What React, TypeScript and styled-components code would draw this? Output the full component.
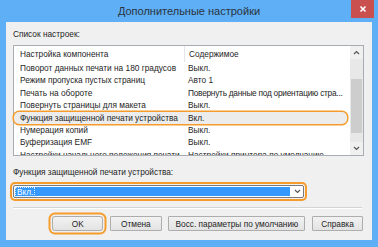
import React from "react";
import styled, { createGlobalStyle } from "styled-components";

const GlobalStyle = createGlobalStyle`
  html, body {
    margin: 0;
    padding: 0;
    background: #ffffff;
  }
  body {
    font-family: "Liberation Sans", Arial, sans-serif;
  }
`;

const ORANGE = "#f59c2c";

type Setting = { name: string; value: string; focused?: boolean; tight?: boolean };

const settings: Setting[] = [
  { name: "Поворот данных печати на 180 градусов", value: "Выкл." },
  { name: "Режим пропуска пустых страниц", value: "Авто 1" },
  { name: "Печать на обороте", value: "Повернуть данные под ориентацию стра...", tight: true },
  { name: "Повернуть страницы для макета", value: "Выкл." },
  { name: "Функция защищенной печати устройства", value: "Вкл.", focused: true },
  { name: "Нумерация копий", value: "Выкл." },
  { name: "Буферизация EMF", value: "Выкл." },
  { name: "Настройки начального положения печати", value: "Настройки принтера по умолчанию" },
];

const Chevron = ({ up }: { up?: boolean }) => (
  <svg width="7" height="5" viewBox="0 0 7 5">
    <path
      d={up ? "M1 4 L3.5 1.5 L6 4" : "M1 1 L3.5 3.5 L6 1"}
      fill="none"
      stroke="#555"
      strokeWidth="1.2"
    />
  </svg>
);

export default function App() {
  return (
    <>
      <GlobalStyle />
      <Window>
        <TitleBar>
          <span />
          <Title>Дополнительные настройки</Title>
          <CloseButton>
            <svg width="8" height="8" viewBox="0 0 8 8">
              <path d="M1.5 1.5 L6.5 6.5 M6.5 1.5 L1.5 6.5" stroke="#fff" strokeWidth="1.6" />
            </svg>
          </CloseButton>
        </TitleBar>
        <Client>
          <Label>Список настроек:</Label>
          <ListBox>
            <ListBody>
              <HeaderRow>
                <HeaderCell>Настройка компонента</HeaderCell>
                <HeaderCell $last>Содержимое</HeaderCell>
              </HeaderRow>
              <Rows>
                {settings.map((s) => (
                  <Row key={s.name} $focused={s.focused}>
                    <NameCell>{s.name}</NameCell>
                    <ValueCell $tight={s.tight}>{s.value}</ValueCell>
                  </Row>
                ))}
              </Rows>
            </ListBody>
            <ScrollBar>
              <ScrollArrow>
                <Chevron up />
              </ScrollArrow>
              <Track>
                <Thumb />
              </Track>
              <ScrollArrow>
                <Chevron />
              </ScrollArrow>
            </ScrollBar>
          </ListBox>
          <Label $gap>Функция защищенной печати устройства:</Label>
          <Select>
            <SelectValue>
              <FocusText>Вкл.</FocusText>
            </SelectValue>
            <SelectArrow>
              <Chevron />
            </SelectArrow>
          </Select>
          <Separator />
          <ButtonRow>
            <Button $w={51} $focused>
              OK
            </Button>
            <Button $w={52}>Отмена</Button>
            <Button $w={137}>Восс. параметры по умолчанию</Button>
            <Button $w={51}>Справка</Button>
          </ButtonRow>
        </Client>
      </Window>
    </>
  );
}

const Window = styled.div`
  width: 378px;
  height: 247px;
  background: #5eaff5;
  display: flex;
  flex-direction: column;
  box-sizing: border-box;
  padding-bottom: 7px;
`;

const TitleBar = styled.div`
  height: 22px;
  display: grid;
  grid-template-columns: 1fr auto 1fr;
  align-items: start;
`;

const Title = styled.div`
  font-size: 11px;
  line-height: 23px;
  color: #2a3340;
  white-space: nowrap;
`;

const CloseButton = styled.div`
  justify-self: end;
  margin-right: 4px;
  width: 23px;
  height: 18px;
  background: #c9504f;
  display: flex;
  align-items: center;
  justify-content: center;
`;

const Client = styled.div`
  flex: 1;
  margin: 0 6px;
  background: #f0f0f0;
  padding: 6px 8px 9px 7px;
  display: flex;
  flex-direction: column;
`;

const Label = styled.div<{ $gap?: boolean }>`
  font-size: 8.3px;
  line-height: 12px;
  color: #1e1e1e;
  margin-top: ${(p) => (p.$gap ? "10px" : "0")};
  margin-bottom: ${(p) => (p.$gap ? "7px" : "5px")};
  white-space: nowrap;
`;

const ListBox = styled.div`
  height: 111px;
  box-sizing: border-box;
  border: 1px solid #a8adb4;
  background: #ffffff;
  display: grid;
  grid-template-columns: 1fr 13px;
  grid-template-rows: 100%;
`;

const ListBody = styled.div`
  display: flex;
  flex-direction: column;
  min-width: 0;
  min-height: 0;
`;

const HeaderRow = styled.div`
  height: 16px;
  flex: none;
  display: grid;
  grid-template-columns: 170px 1fr;
  align-items: center;
  font-size: 8.3px;
  color: #1e1e1e;
`;

const HeaderCell = styled.div<{ $last?: boolean }>`
  padding-left: ${(p) => (p.$last ? "4px" : "6px")};
  border-left: ${(p) => (p.$last ? "1px solid #e3e5e8" : "none")};
  line-height: 16px;
  white-space: nowrap;
`;

const Rows = styled.div`
  flex: 1;
  min-height: 0;
  clip-path: inset(0 -6px 0 -6px);
`;

const Row = styled.div<{ $focused?: boolean }>`
  height: 12.4px;
  display: grid;
  grid-template-columns: 170px 1fr;
  align-items: center;
  font-size: 8.3px;
  color: #1e1e1e;
  margin-right: ${(p) => (p.$focused ? "3px" : "0")};
  border-radius: 5px;
  background: ${(p) => (p.$focused ? "#ececec" : "transparent")};
  box-shadow: ${(p) => (p.$focused ? `0 0 0 1.5px ${ORANGE}` : "none")};
`;

const NameCell = styled.div`
  padding-left: 6px;
  white-space: nowrap;
  line-height: 12.4px;
`;

const ValueCell = styled.div<{ $tight?: boolean }>`
  padding: 0 2px 0 4px;
  white-space: nowrap;
  line-height: 12.4px;
  letter-spacing: ${(p) => (p.$tight ? "-0.25px" : "normal")};
`;

const ScrollBar = styled.div`
  background: #e8e8e8;
  display: flex;
  flex-direction: column;
  min-height: 0;
  position: relative;
  z-index: 1;
`;

const ScrollArrow = styled.div`
  height: 13px;
  flex: none;
  display: flex;
  align-items: center;
  justify-content: center;
  background: #f0f0f0;
`;

const Track = styled.div`
  flex: 1;
  padding-top: 20px;
`;

const Thumb = styled.div`
  height: 54px;
  margin: 0 1px;
  background: #cdcdcd;
`;

const Select = styled.div`
  height: 13px;
  width: 291px;
  box-sizing: border-box;
  border: 1px solid #7a7a7a;
  border-radius: 2px;
  background: #ffffff;
  display: flex;
  box-shadow: 0 0 0 1px #f0f0f0, 0 0 0 3px ${ORANGE};
`;

const SelectValue = styled.div`
  flex: 1;
  margin: 1px;
  background: #3399ff;
  display: flex;
  align-items: center;
  padding-left: 1px;
`;

const FocusText = styled.span`
  font-size: 8.3px;
  line-height: 8px;
  color: #ffffff;
  outline: 1px dotted #d8ecff;
  padding: 0 1px;
`;

const SelectArrow = styled.div`
  width: 12px;
  display: flex;
  align-items: center;
  justify-content: center;
`;

const Separator = styled.div`
  margin-top: 9px;
  height: 1px;
  width: 349px;
  background: #d4d4d4;
  box-shadow: 0 1px 0 #ffffff;
`;

const ButtonRow = styled.div`
  margin-top: 8px;
  display: flex;
  justify-content: flex-end;
  gap: 6.6px;
  padding-right: 1px;
`;

const Button = styled.div<{ $w: number; $focused?: boolean }>`
  width: ${(p) => p.$w}px;
  height: 15px;
  box-sizing: border-box;
  border: 1px solid #adadad;
  border-radius: ${(p) => (p.$focused ? "3px" : "1px")};
  background: linear-gradient(#f2f2f2, #e3e3e3);
  font-size: 8.3px;
  color: #1e1e1e;
  display: flex;
  align-items: center;
  justify-content: center;
  white-space: nowrap;
  box-shadow: ${(p) =>
    p.$focused ? `0 0 0 1.5px #f0f0f0, 0 0 0 3.5px ${ORANGE}` : "none"};
`;
